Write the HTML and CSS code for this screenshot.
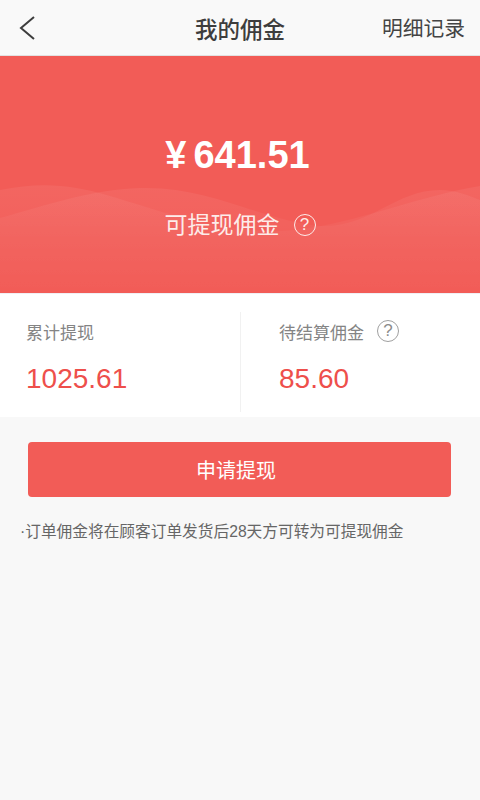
FILE: index.html
```html
<!DOCTYPE html>
<html>
<head>
  <title>我的佣金</title>
  <link rel="stylesheet" href="styles.css">
</head>
<body>
  <div class="header">
    <svg class="back-icon" viewBox="0 0 16 24" width="16" height="24">
      <path d="M15 1 L2 12 L15 23" fill="none" stroke="#3d3d3d" stroke-width="2"/>
    </svg>
    <h1>我的佣金</h1>
    <a href="#" class="records-link">明细记录</a>
  </div>

  <div class="hero">
    <svg class="waves" viewBox="0 0 480 110" preserveAspectRatio="none">
      <defs>
        <linearGradient id="waveFade" x1="0" y1="0" x2="0" y2="1">
          <stop offset="0" stop-color="#fff" stop-opacity="0.06"/>
          <stop offset="0.5" stop-color="#fff" stop-opacity="0.025"/>
          <stop offset="1" stop-color="#fff" stop-opacity="0"/>
        </linearGradient>
      </defs>
      <path d="M0 6 C40 -2 70 0 110 12 C170 30 240 56 310 44 C370 34 420 12 480 2 L480 110 L0 110 Z" fill="url(#waveFade)"/>
      <path d="M0 34 C50 20 90 6 140 4 C210 2 260 36 320 42 C370 44 395 6 440 6 C455 6 470 12 480 16 L480 110 L0 110 Z" fill="url(#waveFade)"/>
    </svg>
    <div class="hero-amount"><span class="currency">¥</span>641.51</div>
    <div class="hero-label">
      可提现佣金
      <span class="help help-light">?</span>
    </div>
  </div>

  <div class="stats">
    <div class="stat">
      <div class="stat-label">累计提现</div>
      <div class="stat-value">1025.61</div>
    </div>
    <div class="stat stat-right">
      <div class="stat-label">待结算佣金 <span class="help help-grey">?</span></div>
      <div class="stat-value">85.60</div>
    </div>
  </div>

  <div class="content">
    <button class="withdraw-btn">申请提现</button>
    <p class="note">·订单佣金将在顾客订单发货后28天方可转为可提现佣金</p>
  </div>
</body>
</html>
```

FILE: styles.css
```css
html, body {
  height: 100%;
}
body {
  margin: 0;
  display: flex;
  flex-direction: column;
  background: #f8f8f8;
  font-family: "Liberation Sans", "Noto Sans CJK SC", sans-serif;
}

/* Top bar */
.header {
  height: 55px;
  flex-shrink: 0;
  position: relative;
  display: flex;
  align-items: center;
  justify-content: center;
  background: #f9f9f9;
  border-bottom: 1px solid #e2e2e2;
}
.header h1 {
  margin: 0;
  font-size: 22.5px;
  font-weight: 500;
  color: #3d3d3d;
}
.back-icon {
  position: absolute;
  left: 19px;
  top: 16px;
}
.records-link {
  position: absolute;
  right: 15px;
  top: 16px;
  font-size: 20.75px;
  line-height: 26px;
  color: #444;
  text-decoration: none;
}

/* Red panel */
.hero {
  height: 237px;
  flex-shrink: 0;
  position: relative;
  overflow: hidden;
  display: flex;
  flex-direction: column;
  align-items: center;
  background: #f25c57;
  border-bottom: 1px solid #f0eff4;
}
.waves {
  position: absolute;
  left: 0;
  top: 128px;
  width: 100%;
  height: 110px;
}
.hero-amount {
  position: relative;
  margin-top: 74px;
  padding-right: 5px;
  font-size: 38px;
  line-height: 50px;
  font-weight: 700;
  color: #fff;
}
.currency {
  margin-right: 7px;
  font-size: 38px;
}
.hero-label {
  position: relative;
  margin-top: 29px;
  display: flex;
  align-items: center;
  gap: 14px;
  font-size: 23px;
  line-height: 32px;
  color: #fdecea;
}

/* Question mark badges */
.help {
  display: inline-flex;
  align-items: center;
  justify-content: center;
  box-sizing: border-box;
  width: 22px;
  height: 22px;
  border-radius: 50%;
  font-size: 17px;
}
.help-light {
  border: 1px solid #fdecea;
  color: #fdecea;
}
.help-grey {
  margin-left: 13px;
  border: 1px solid #a0a0a0;
  color: #8c8c8c;
}

/* Totals */
.stats {
  height: 123px;
  flex-shrink: 0;
  display: flex;
  background: #fff;
}
.stat {
  flex: 0 0 240px;
  box-sizing: border-box;
  height: 100px;
  margin-top: 18px;
  padding-left: 26px;
}
.stat-right {
  padding-left: 38px;
  border-left: 1px solid #f1f1f1;
}
.stat-label {
  display: flex;
  align-items: center;
  height: 24px;
  margin-top: 7px;
  font-size: 17px;
  color: #848484;
}
.stat-value {
  margin-top: 18px;
  font-size: 28px;
  line-height: 36px;
  color: #ee4f4b;
}

/* Lower area */
.content {
  padding: 25px 29px 0 28px;
}
.withdraw-btn {
  display: block;
  width: 100%;
  height: 55px;
  padding: 0 7px 0 0;
  border: none;
  border-radius: 4px;
  background: #f25c57;
  color: #fff;
  font-family: inherit;
  font-size: 20px;
}
.note {
  margin: 24px 0 0 -8px;
  font-size: 15.7px;
  line-height: 22px;
  color: #666;
  white-space: nowrap;
}
```
